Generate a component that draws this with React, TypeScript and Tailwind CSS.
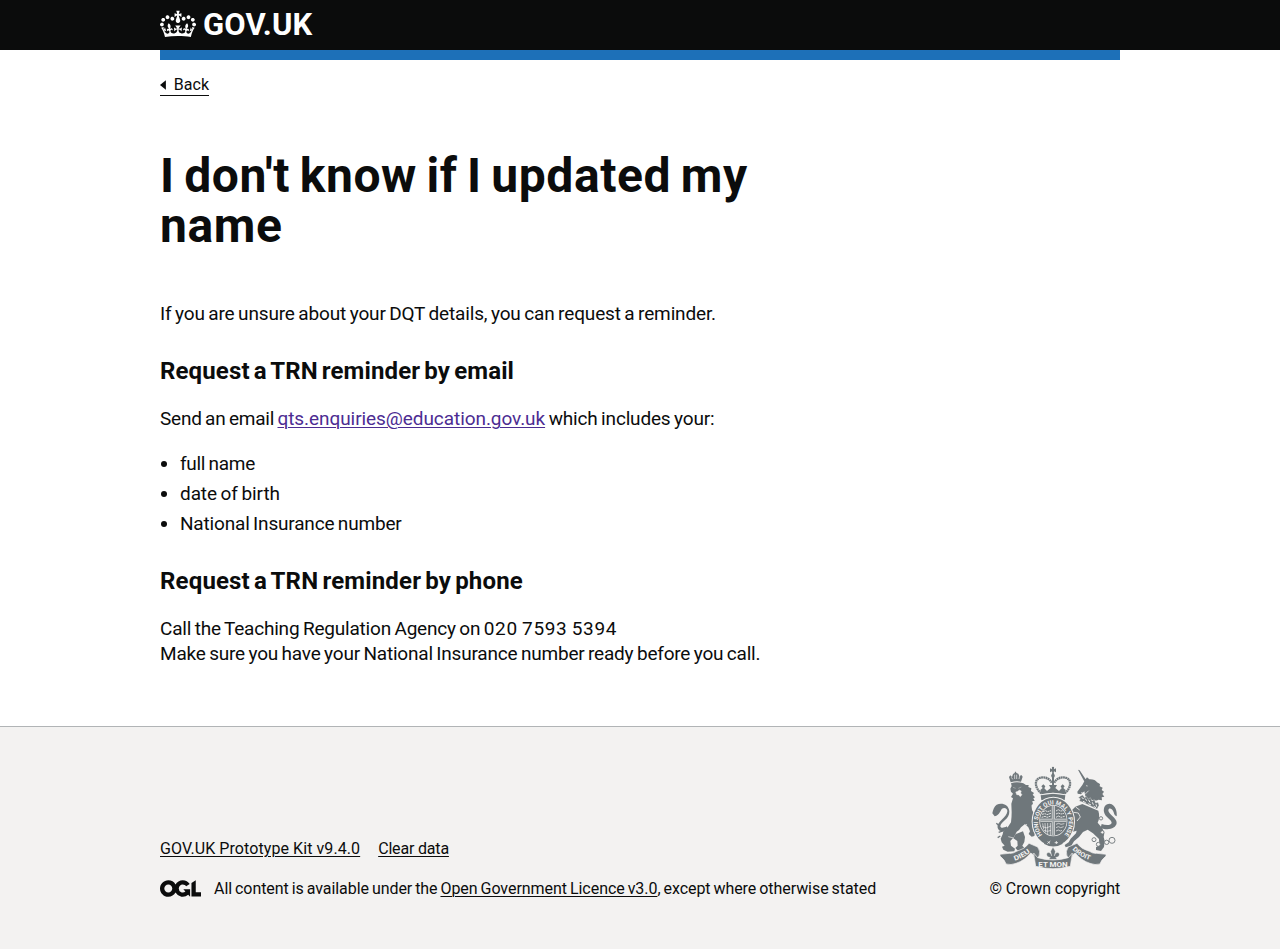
import type { ReactNode } from "react";

function Crown() {
  return (
    <svg viewBox="0 0 132 97" width="36" height="30" preserveAspectRatio="xMidYMid meet" className="block h-[30px] w-9" fill="currentColor" fillRule="evenodd" aria-hidden="true">
      <path d="M25 30.2c3.5 1.5 7.7-.2 9.1-3.7 1.5-3.6-.2-7.8-3.9-9.2-3.6-1.4-7.6.3-9.1 3.9-1.4 3.5.3 7.5 3.9 9zM9 39.5c3.6 1.5 7.8-.2 9.2-3.7 1.5-3.6-.2-7.8-3.9-9.1-3.6-1.5-7.6.2-9.1 3.8-1.4 3.5.3 7.5 3.8 9zM4.4 57.2c3.5 1.5 7.7-.2 9.1-3.8 1.5-3.6-.2-7.7-3.9-9.1-3.5-1.5-7.6.3-9.1 3.8-1.4 3.5.3 7.6 3.9 9.1zm38.3-21.4c3.5 1.5 7.7-.2 9.1-3.8 1.5-3.6-.2-7.7-3.9-9.1-3.6-1.5-7.6.3-9.1 3.8-1.3 3.6.4 7.7 3.9 9.1zm64.4-5.6c-3.6 1.5-7.8-.2-9.1-3.7-1.5-3.6.2-7.8 3.8-9.2 3.6-1.4 7.7.3 9.2 3.9 1.3 3.5-.4 7.5-3.9 9zm15.9 9.3c-3.6 1.5-7.7-.2-9.1-3.7-1.5-3.6.2-7.8 3.7-9.1 3.6-1.5 7.7.2 9.2 3.8 1.5 3.5-.3 7.5-3.8 9zm4.7 17.7c-3.6 1.5-7.8-.2-9.2-3.8-1.5-3.6.2-7.7 3.9-9.1 3.6-1.5 7.7.3 9.2 3.8 1.3 3.5-.4 7.6-3.9 9.1zM89.3 35.8c-3.6 1.5-7.8-.2-9.2-3.8-1.4-3.6.2-7.7 3.9-9.1 3.6-1.5 7.7.3 9.2 3.8 1.4 3.6-.3 7.7-3.9 9.1zM69.7 17.7l8.9 4.7V9.3l-8.9 2.8c-.2-.3-.5-.6-.9-.9L72.4 0H59.6l3.5 11.2c-.3.3-.6.5-.9.9l-8.8-2.8v13.1l8.8-4.7c.3.3.6.7.9.9l-5 15.4v.1c-.2.8-.4 1.6-.4 2.4 0 4.1 3.1 7.5 7 8.1h.2c.3 0 .7.1 1 .1.4 0 .7 0 1-.1h.2c4-.6 7.1-4.1 7.1-8.1 0-.8-.1-1.7-.4-2.4V34l-5.1-15.4c.4-.2.7-.6 1-.9zM66 92.8c16.9 0 32.8 1.1 47.1 3.2 4-16.9 8.9-26.7 14-33.5l-9.6-3.4c1 4.9 1.1 7.2 0 10.2-1.5-1.4-3-4.3-4.2-8.7L108.6 76c2.8-2 5-3.2 7.5-3.3-4.4 9.4-10 11.9-13.6 11.2-4.3-.8-6.3-4.6-5.6-7.9 1-4.7 5.7-5.9 8-.5 4.3-8.7-3-11.4-7.6-8.8 7.1-7.2 7.9-13.5 2.1-21.1-8 6.1-8.1 12.3-4.5 20.8-4.7-5.4-12.1-2.5-9.5 6.2 3.4-5.2 7.9-2 7.2 3.1-.6 4.3-6.4 7.8-13.5 7.2-10.3-.9-10.9-8-11.2-13.8 2.5-.5 7.1 1.8 11 7.3L80.2 60c-4.1 4.4-8 5.3-12.3 5.4 1.4-4.4 8-11.6 8-11.6H55.5s6.4 7.2 7.9 11.6c-4.2-.1-8-1-12.3-5.4l1.4 16.4c3.9-5.5 8.5-7.7 10.9-7.3-.3 5.8-.9 12.8-11.1 13.8-7.2.6-12.9-2.9-13.5-7.2-.7-5 3.8-8.3 7.1-3.1 2.7-8.7-4.6-11.6-9.4-6.2 3.7-8.5 3.6-14.7-4.6-20.8-5.8 7.6-5 13.9 2.2 21.1-4.7-2.6-11.9.1-7.7 8.8 2.3-5.5 7.1-4.2 8.1.5.7 3.3-1.3 7.1-5.7 7.9-3.5.7-9-1.8-13.5-11.2 2.5.1 4.7 1.3 7.5 3.3l-4.7-15.4c-1.2 4.4-2.7 7.2-4.3 8.7-1.1-3-.9-5.3 0-10.2l-9.5 3.4c5 6.9 9.9 16.7 14 33.5 14.8-2.1 30.8-3.2 47.7-3.2z" />
    </svg>
  );
}

function OglLogo() {
  return (
    <svg viewBox="0 0 483.2 195.7" width="41" height="17" className="mt-px block h-[17px] w-[41px] shrink-0" fill="currentColor" aria-hidden="true">
      <path d="M421.5 142.8V.1l-50.7 32.3v161.1h112.4v-50.7zm-122.3-9.6A47.12 47.12 0 0 1 221 97.8c0-26 21.1-47.1 47.1-47.1 16.7 0 31.4 8.7 39.7 21.8l42.7-27.2A97.63 97.63 0 0 0 268.1 0c-36.5 0-68.3 20.1-85.1 49.7A98 98 0 0 0 97.8 0C43.9 0 0 43.9 0 97.8s43.9 97.8 97.8 97.8c36.5 0 68.3-20.1 85.1-49.7a97.76 97.76 0 0 0 149.6 25.4l19.4 22.2h3v-87.8h-80l24.3 27.5zM97.8 145c-26 0-47.1-21.1-47.1-47.1s21.1-47.1 47.1-47.1 47.1 21.1 47.1 47.1S123.8 145 97.8 145" />
    </svg>
  );
}

const PAPER = "#f3f2f1";

function RoyalArms() {
  return (
    <svg viewBox="15 0 390 336" width="130" height="112" className="block h-28 w-[130px]" fill="#6f777b" fontFamily="Roboto, sans-serif" fontWeight="700" aria-hidden="true">
      {/* imperial crown */}
      <circle cx="204" cy="18" r="3.5" />
      <path d="M195 19l6 3 1-7h4l1 7 6-3v12l-6-3-1 6h-4l-1-6-6 3zM201 34h6v50h-6z" />
      <circle cx="204" cy="41" r="5.5" />
      <g fill="none" stroke="#6f777b">
        <path d="M169 94C149 78 148 54 163 48c15-5 31 1 37 14M239 94c20-16 21-40 6-46-15-5-31 1-37 14" strokeWidth="7" strokeDasharray="5.5 1.2" />
      </g>
      <path d="M166 84l7-6-4-5 6-6 6 6-3 6 8 8 11-9-5-9h24l-5 9 11 9 8-8-3-6 6-6 6 6-4 5 7 6-3 13q-35-9-70 0z" />
      <path d="M167 100q37-9 74 0l-2 15q-35-10-70 0z" />
      <path d="M171 98q33-8 66 0" fill="none" stroke={PAPER} strokeWidth="1.6" />

      {/* lion */}
      <path d="M77 61l-5-16 4-5 5 5 3-9 5-3 1-4h3l1 4 6 2 3 8 6-4 4 5-5 15q-14-4-31 2z" />
      <path d="M79 46l4 6M89 38v13M95 38v13M104 42l-2 9" stroke={PAPER} strokeWidth="2" />
      <path d="M78 64q17-6 37 0l8 5 8 0-1 6 9 4-1 8 9 6-4 5 7 8-5 3 4 8-7 0 2 9-4 3q-1 14 4 20 5 9 12 9l10-3 3 12-9 12-10 3-2 12 3 16-3 12-8 2-9-8 4-8-5-12-10-10-12 10q-5 10-13 13l-8 16-11 12 2 14 12 9-2 8-20 1-13-6-4-9 8-3-9-10-3-11 6-13 2-9 14-14 9-13q2-14 2-30l-1-26 5-16-6-4 6-10-6-6-2-9 4-8z" />
      <path d="M92 90l6-2 5-4 6 3-2 6 4 5-5 6-5-5-6-1zM84 76l8 3M100 79l9-4" fill={PAPER} stroke={PAPER} strokeWidth="1" />
      <path d="M126 186l-13 14M70 224l16 4" fill="none" stroke={PAPER} strokeWidth="2" />
      <path d="M92 216l22-8 6 17-2 15-6 11 6 7-3 8-16 0-8-8 7-7-1-14-12-8z" />
      <path d="M66 202c-12 10-25 6-28-4-5-17 28-31 29-50 1-9-9-13-16-8-5 5-6 18-22 23l-7-9c2-11 6-21 13-26 13-7 36-3 38 20 1 24-24 30-27 44 0 7 9 7 20 1z" />
      <path d="M56 206l-15 5M46 222l-8 5M41 190l-7-6" stroke="#6f777b" strokeWidth="4" />

      {/* unicorn */}
      <path d="M279 23l5 2 24 36-6 5zM300 54l6-8 7 6q17-1 23 9l9 5-1 7 9 4-3 7 7 5-5 7 6 8-8 2 1 9-11-2q-8 5-20 0l-12-3-7-8-3-14-10 9-10-2-1-6 6-8 9-12z" />
      <path d="M303 71l5 1M288 92l6 1M299 98l12-12" stroke={PAPER} strokeWidth="2" />
      <path d="M288 101l5-2 6 8 5-4 6 9 6-5 5 10 7-4 4 10 7-2 3 9-6 11-44-21-9-3 3-7-6-3z" stroke={PAPER} strokeWidth="1" />
      <path d="M290 107l6 3M301 110l4 6M311 114l4 7M322 121l3 7M333 127l2 7M294 118l8 4M310 125l8 4M326 133l7 4" stroke={PAPER} strokeWidth="3" />
      <path d="M292 126l48 20q6 20-2 36l14 17 6 14-2 12 3 12-2 18-9 12-15-3 0-8 10-6-1-19-18-17-16-11-14 7-12 15-15 13-8 13-17 5-3-7 12-8 6-11 16-16 2-8-14 4-10-5-4-9 8-9-6-10-7-4-6-14 3-11-9-6-7-4 4-7 13-1 12 8 10 5 9-9z" />
      <path d="M272 135l12 9M266 151l14 2 6 12-10 12" fill="none" stroke={PAPER} strokeWidth="2.5" />
      <path d="M347 197c20 10 46 3 48-14 1-15-25-25-25-38 1-11 13-5 16 6 2 8 5 11 9 12 2-13-3-36-21-38-14 0-19 12-17 25 3 16 22 22 23 32-1 9-18 9-30 4z" />
      <g fill={PAPER} stroke="#6f777b" strokeWidth="2.7">
        <circle cx="327" cy="233" r="6" />
        <circle cx="340" cy="247" r="6" />
        <circle cx="365" cy="241" r="6.5" />
        <circle cx="381" cy="235" r="9" />
        <circle cx="348" cy="169" r="5" />
        <circle cx="352" cy="211" r="5" />
      </g>

      {/* garter and shield */}
      <ellipse cx="205" cy="179" rx="65" ry="75" fill={PAPER} />
      <ellipse cx="205" cy="179" rx="62" ry="72" />
      <ellipse cx="205" cy="176" rx="42" ry="47" fill={PAPER} />
      <ellipse cx="205" cy="176" rx="40" ry="45" />
      <path id="garter" d="M172 219A46 54 0 1 1 238 219" fill="none" />
      <text fontSize="18" fill={PAPER}>
        <textPath href="#garter" textLength="238" lengthAdjust="spacingAndGlyphs">HONI SOIT QUI MAL Y PENSE</textPath>
      </text>
      <path d="M166 175h78M205 132v88" stroke={PAPER} strokeWidth="9" />
      <path d="M166 175h78M205 132v88" stroke="#9da3a5" strokeWidth="6" />
      <g fill="none" stroke={PAPER} strokeWidth="2.6">
        <path d="M174 149l8-3 5 3 11-3M171 157l9-2 6 3 12-4M170 166l10-3 6 3 12-4M213 147l7-4 7 4 7-1M213 156l7-3 8 3 9-2M213 166l7-4 8 4 11-3" strokeDasharray="6 1.5" />
        <path d="M173 184l3 18M180 183l2 28M188 183v33M196 183v36M172 194q13 8 26-2M176 205q12 6 22 0M213 187l8-3 7 3 10-2M213 197l7-3 7 3 9-3M213 207l7-3 6 3 5-2" strokeWidth="2" />
      </g>
      <path d="M172 229q33 20 66 0l-6 17q-27 15-54 0z" />
      <path d="M188 239l7 5M196 237l-9 8M214 237v9M209 242h10" stroke={PAPER} strokeWidth="2.5" />

      {/* ribbon */}
      <g stroke={PAPER} strokeWidth="2">
        <path d="M45 277l28-3q12 1 22-6 24-6 37-24l26 11q10 13 4 28l-13 12-4-17-8-5q-17 22-44 31-15 6-30 2-3-12-18-24z" />
        <path d="M363 277l-28-3q-12 1-22-6-24-6-37-24l-26 11q-10 13-4 28l13 12 4-17 8-5q17 22 44 31 15 6 30 2 3-12 18-24z" />
        <path d="M146 273l12 14q46 14 92 0l12-14-6 40q-52 14-104 0z" />
      </g>
      <path id="ribbon-left" d="M89 296Q121 286 144 263" fill="none" />
      <path id="ribbon-right" d="M262 262Q287 288 321 296" fill="none" />
      <g fill={PAPER} fontSize="20">
        <text><textPath href="#ribbon-left" textLength="54" lengthAdjust="spacingAndGlyphs">DIEU</textPath></text>
        <text fontSize="19"><textPath href="#ribbon-right" textLength="62" lengthAdjust="spacingAndGlyphs">DROIT</textPath></text>
        <text x="160" y="314" textLength="88" lengthAdjust="spacingAndGlyphs">ET MON</text>
      </g>

      {/* fleur-de-lis */}
      <path d="M204 256l7 12-3 14q4-14 14-9 4 10-8 13h-2l4 6h-24l4-6h-2q-12-3-8-13 10-5 14 9l-3-14z" stroke={PAPER} strokeWidth="1" />
    </svg>
  );
}

function FooterLink({ children, className }: { children: ReactNode; className: string }) {
  return (
    <a href="#" className={`underline decoration-1 underline-offset-[2px] ${className}`}>
      {children}
    </a>
  );
}

export default function App() {
  return (
    <div className="flex h-[949px] flex-col bg-white font-['Roboto',sans-serif] text-[19px] leading-[25px] text-[#0b0c0c]">
      <header className="h-[50px] shrink-0 bg-[#0b0c0c] text-white">
        <a href="#" className="mx-auto flex w-[960px] gap-[7px] pt-[9px]">
          <Crown />
          <span className="text-[31px] leading-[31px] font-bold tracking-[0.2px]">GOV.UK</span>
        </a>
      </header>

      <div className="mx-auto h-[10px] w-[960px] shrink-0 bg-[#1d70b8]" />

      <div className="mx-auto w-[960px] pt-[15px]">
        <a href="#" className="flex w-[49px] items-center gap-2 border-b border-[#0b0c0c] text-[16px] leading-5">
          <svg viewBox="0 0 6 10" className="block h-[10px] w-[6px]" fill="currentColor" aria-hidden="true">
            <path d="M6 0v10L0 5z" />
          </svg>
          <span>Back</span>
        </a>

        <main className="w-[630px] pt-[55px]">
          <h1 className="mb-[50px] text-[48px] leading-[50px] font-bold tracking-[0.6px] [word-spacing:-3px]">
            I don't know if I updated my name
          </h1>
          <p className="mb-[30px] tracking-[-0.15px] whitespace-nowrap [word-spacing:-1px]">
            If you are unsure about your DQT details, you can request a reminder.
          </p>
          <h2 className="mb-5 text-[24px] leading-[30px] font-bold tracking-[0.13px] [word-spacing:-2px]">
            Request a TRN reminder by email
          </h2>
          <p className="mb-5 whitespace-nowrap [word-spacing:-1px]">
            <span className="tracking-[-0.24px]">Send an email </span>
            <a href="#" className="tracking-[-0.07px] text-[#4c2c92] underline decoration-1 underline-offset-[2px]">
              qts.enquiries@education.gov.uk
            </a>
            <span className="tracking-[-0.17px]"> which includes your:</span>
          </p>
          <ul className="mb-[30px] flex list-disc flex-col gap-[5px] pl-5 [word-spacing:-1px]">
            <li className="tracking-[-0.29px]">full name</li>
            <li className="tracking-[-0.09px]">date of birth</li>
            <li className="tracking-[-0.18px]">National Insurance number</li>
          </ul>
          <h2 className="mb-5 text-[24px] leading-[30px] font-bold tracking-[0.17px] [word-spacing:-2px]">
            Request a TRN reminder by phone
          </h2>
          <p className="whitespace-nowrap [word-spacing:-1px]">
            <span className="tracking-[-0.2px]">Call the Teaching Regulation Agency on </span>
            <span className="tracking-[0.65px]">020 7593 5394</span>
            <br />
            <span className="tracking-[-0.2px]">
              Make sure you have your National Insurance number ready before you call.
            </span>
          </p>
        </main>
      </div>

      <footer className="mt-auto h-[223px] shrink-0 border-t border-[#b1b4b6] bg-[#f3f2f1] text-[16px] leading-5">
        <div className="mx-auto flex w-[960px] items-end justify-between pt-[35px]">
          <div>
            <div className="mb-5 flex gap-[18px]">
              <FooterLink className="tracking-[0.08px]">GOV.UK Prototype Kit v9.4.0</FooterLink>
              <FooterLink className="tracking-[-0.18px]">Clear data</FooterLink>
            </div>
            <div className="flex gap-[13px]">
              <OglLogo />
              <p className="whitespace-nowrap [word-spacing:-1px]">
                <span className="tracking-[-0.05px]">All content is available under the </span>
                <FooterLink className="tracking-[-0.04px]">Open Government Licence v3.0</FooterLink>
                <span className="tracking-[-0.05px]">, except where otherwise stated</span>
              </p>
            </div>
          </div>
          <div className="flex flex-col gap-[5px]">
            <RoyalArms />
            <p className="tracking-[-0.12px] whitespace-nowrap">© Crown copyright</p>
          </div>
        </div>
      </footer>
    </div>
  );
}
